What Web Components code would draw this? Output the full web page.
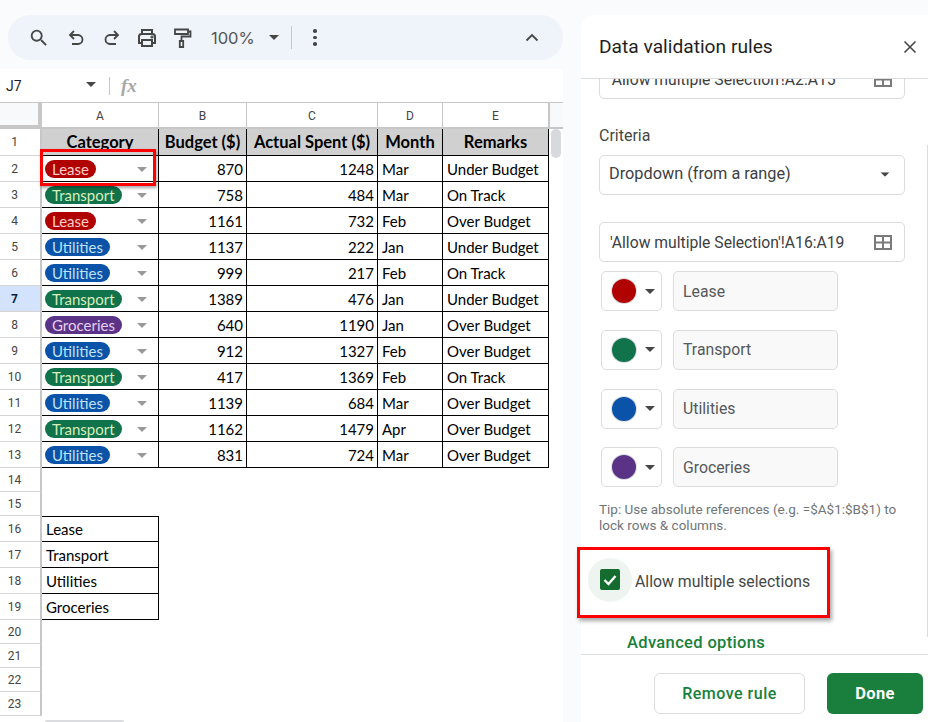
<!DOCTYPE html>
<html lang="en">
<head>
<meta charset="utf-8">
<title>Data validation rules</title>
<style>
html,body{margin:0;height:722px;overflow:hidden;background:#f9fbfd;font-family:Roboto,"Liberation Sans",sans-serif}
</style>
</head>
<body>
<sheet-app></sheet-app>
<script>
const ICONS={
 search:'<svg width="22" height="22" viewBox="0 0 24 24" fill="#444746"><path d="M15.5 14h-.79l-.28-.27A6.471 6.471 0 0 0 16 9.5 6.5 6.5 0 1 0 9.5 16c1.61 0 3.09-.59 4.23-1.57l.27.28v.79l5 4.99L20.49 19l-4.99-5zm-6 0C7.01 14 5 11.99 5 9.5S7.01 5 9.5 5 14 7.01 14 9.5 11.99 14 9.5 14z"/></svg>',
 undo:'<svg width="24" height="24" viewBox="0 0 24 24" fill="none" stroke="#444746" stroke-width="1.800"><path d="M10 5 6 9l4 4"/><path d="M6 9h8a4 4 0 0 1 0 9H8"/></svg>',
 redo:'<svg width="24" height="24" viewBox="0 0 24 24" fill="none" stroke="#444746" stroke-width="1.800"><path d="m14 5 4 4-4 4"/><path d="M18 9h-8a4 4 0 0 0 0 9h6"/></svg>',
 print:'<svg width="24" height="24" viewBox="0 0 24 24" fill="none" stroke="#444746" stroke-width="2"><path d="M7 8V4h10v4"/><path d="M7 17H4v-6.500a2.500 2.500 0 0 1 2.500-2.500h11a2.500 2.500 0 0 1 2.500 2.500V17h-3"/><path d="M7 14h10v6H7z"/><circle cx="17" cy="11" r=".6" fill="#444746"/></svg>',
 roller:'<svg width="24" height="24" viewBox="0 0 24 24" fill="none" stroke="#444746" stroke-width="1.800"><path d="M5 3.500h13v4.500H5z"/><path d="M18 5.500h2.500v5H11.500v4.500"/><path d="M9.800 15h3.400v6H9.800z"/></svg>',
 caret:'<svg width="10" height="5" viewBox="0 0 10 5" fill="currentColor" style="display:block"><path d="M0 0h10L5 5z"/></svg>',
 grid:'<svg width="18" height="15" viewBox="0 0 18 15" fill="none" stroke="#7a7a7a" stroke-width="2" style="display:block"><path d="M1 1h16v13H1zM9 1v13M1 7.500h16"/></svg>'
};

class SheetApp extends HTMLElement{
 constructor(){super();this.attachShadow({mode:'open'}).innerHTML=`
 <style>
 :host{display:flex;width:928px;height:722px;overflow:hidden}
 .left{width:563px;flex:none;padding-top:15px;box-sizing:border-box;display:flex;flex-direction:column}
 dv-panel{flex:1;margin-left:18px;margin-top:15px}
 </style>
 <div class="left">
  <sheet-toolbar></sheet-toolbar>
  <formula-bar></formula-bar>
  <sheet-area></sheet-area>
 </div>
 <dv-panel></dv-panel>`;}
}

class SheetToolbar extends HTMLElement{
 constructor(){super();this.attachShadow({mode:'open'}).innerHTML=`
 <style>
 :host{display:flex;align-items:center;height:45px;margin-left:8px;flex:none;background:#eff3fa;border-radius:22px;position:relative;color:#444746}
 .i{display:flex;flex:none;width:24px;height:24px;align-items:center;justify-content:center}
 .zoom{font:400 16.500px "Inter","Roboto",sans-serif;color:#555;margin-left:17px;width:48px;flex:none}
 .caret{margin-left:10px;flex:none;color:#444746;margin-top:-1px}
 .div{width:1px;height:23px;background:#c7c7c7;margin-left:12px;flex:none}
 .dots{display:flex;flex-direction:column;gap:3px;margin-left:21px;flex:none}
 .dots i{display:block;width:3.500px;height:3.500px;border-radius:50%;background:#444746}
 .chev{margin-left:auto;margin-right:24px;flex:none;display:block}
 </style>
 <span class="i" style="margin-left:19px">${ICONS.search}</span>
 <span class="i" style="margin-left:13px">${ICONS.undo}</span>
 <span class="i" style="margin-left:12px">${ICONS.redo}</span>
 <span class="i" style="margin-left:11px">${ICONS.print}</span>
 <span class="i" style="margin-left:11px">${ICONS.roller}</span>
 <span class="zoom">100%</span>
 <span class="caret">${ICONS.caret}</span>
 <span class="div"></span>
 <span class="dots"><i></i><i></i><i></i></span>
 <svg class="chev" width="14" height="9" viewBox="0 0 14 9" fill="none" stroke="#444746" stroke-width="1.800"><path d="m1.500 7.500 5.500-5.500 5.500 5.500"/></svg>`;}
}

class FormulaBar extends HTMLElement{
 constructor(){super();this.attachShadow({mode:'open'}).innerHTML=`
 <style>
 :host{display:flex;align-items:center;height:33px;margin-top:9px;background:#fff;flex:none}
 .ref{font:14px Roboto,sans-serif;color:#1f1f1f;margin-left:6px;width:80px;flex:none}
 .caret{color:#444746;flex:none;width:10px;margin-top:-3px}
 .div{width:1px;height:18px;background:#c7c7c7;margin-left:13px;flex:none}
 .fx{font:italic 700 19px "Liberation Serif",serif;color:#a8a8a8;margin-left:11px}
 </style>
 <span class="ref">J7</span>
 <span class="caret">${ICONS.caret}</span>
 <span class="div"></span>
 <span class="fx">fx</span>`;}
}

class StatusChip extends HTMLElement{
 constructor(){super();this.attachShadow({mode:'open'}).innerHTML=`
 <style>
 :host{display:flex;align-items:center;height:100%;box-sizing:border-box;padding:2px 11px 2px 3px}
 .chip{display:block;height:18px;line-height:18px;border-radius:9px;padding:0 7px;box-sizing:border-box;background:var(--bg);color:var(--fg);font:15px/18px var(--cell-font);white-space:nowrap}
 .arrow{margin-left:auto;color:#999;display:block;margin-top:1px}
 </style>
 <span class="chip"><slot></slot></span>
 <span class="arrow">${ICONS.caret}</span>`;}
}

const CHIP={
 Lease:['#b10202','#ffcfc9'],
 Transport:['#11734b','#d4edbc'],
 Utilities:['#0a53a8','#bfe1f6'],
 Groceries:['#5a3286','#e6cff2']
};
const DATA=[
 ['Lease',870,1248,'Mar','Under Budget'],
 ['Transport',758,484,'Mar','On Track'],
 ['Lease',1161,732,'Feb','Over Budget'],
 ['Utilities',1137,222,'Jan','Under Budget'],
 ['Utilities',999,217,'Feb','On Track'],
 ['Transport',1389,476,'Jan','Under Budget'],
 ['Groceries',640,1190,'Jan','Over Budget'],
 ['Utilities',912,1327,'Feb','Over Budget'],
 ['Transport',417,1369,'Feb','On Track'],
 ['Utilities',1139,684,'Mar','Over Budget'],
 ['Transport',1162,1479,'Apr','Over Budget'],
 ['Utilities',831,724,'Mar','Over Budget']
];

class SheetArea extends HTMLElement{
 constructor(){super();
  const rowH=[27,26,26,26,26,26,26,26,26,26,26,26,26,24,24,26,26,26,26,24,24,24,24];
  let h='';
  h+='<div class="corner"></div>';
  ['A','B','C','D','E'].forEach(c=>h+=`<div class="colh">${c}</div>`);
  const head=['Category','Budget ($)','Actual Spent ($)','Month','Remarks'];
  for(let r=1;r<=23;r++){
   h+=`<div class="rowh${r===7?' sel':''}"><span>${r}</span></div>`;
   if(r===1){head.forEach((t,i)=>h+=`<div class="c hd"><span>${t}</span></div>`);}
   else if(r<=13){
    const d=DATA[r-2],k=d[0];
    h+=`<div class="c chipc"><status-chip style="--bg:${CHIP[k][0]};--fg:${CHIP[k][1]}">${k}</status-chip></div>`;
    h+=`<div class="c num"><span>${d[1]}</span></div><div class="c num"><span>${d[2]}</span></div><div class="c"><span>${d[3]}</span></div><div class="c"><span>${d[4]}</span></div>`;
   }else if(r>=16&&r<=19){
    h+=`<div class="c${r===16?' top':''}"><span>${['Lease','Transport','Utilities','Groceries'][r-16]}</span></div><div style="grid-column:span 4"></div>`;
   }else{
    h+='<div style="grid-column:span 5"></div>';
   }
  }
  this.attachShadow({mode:'open'}).innerHTML=`
  <style>
  :host{display:flex;flex:1;min-height:0;background:#fff;overflow:hidden;position:relative;--cell-font:Lato,"Noto Sans",sans-serif}
  .g{display:grid;grid-template-columns:42px 117px 88px 131px 65px 106px;grid-template-rows:27px ${rowH.join('px ')}px;flex:none;align-content:start}
  .corner{background:#f8f9fa;border-right:4px solid #c7c7c7;border-bottom:4px solid #c7c7c7;box-sizing:border-box;border-top:1px solid #c7c7c7}
  .colh{font:12px Roboto,"Liberation Sans",sans-serif;color:#444;display:flex;align-items:center;justify-content:center;border-top:1px solid #c7c7c7;border-right:1px solid #c7c7c7;border-bottom:2px solid #c7c7c7;box-sizing:border-box;padding-top:1px}
  .rowh{font:12px Roboto,"Liberation Sans",sans-serif;color:#444;display:flex;align-items:center;justify-content:center;padding-right:11px;border-right:2px solid #c7c7c7;border-bottom:1px solid #d4d4d4;box-sizing:border-box}
  .rowh.sel{background:#d3e3fd;color:#041e49;font-weight:700}
  .c{font:15px var(--cell-font);color:#000;border-right:1px solid #000;border-bottom:1px solid #000;box-sizing:border-box;display:flex;align-items:flex-end;padding:0 3px 3px 4px;white-space:nowrap;min-width:0}
  .c.top{box-shadow:inset 0 1px 0 #000}
  .c.num{justify-content:flex-end}
  .c.hd{background:#d0d0d0;font-weight:700;font-size:16.500px;justify-content:center;padding:0 0 3px}
  .c.chipc{padding:0;display:block}
  .bar{flex:none;width:14px;display:flex;flex-direction:column}
  .bar .top{height:27px;box-sizing:border-box;background:#f8f9fa;border-top:1px solid #c7c7c7;border-left:1px solid #c7c7c7;border-bottom:2px solid #c7c7c7;flex:none}
  .thumb{width:10px;height:29px;border-radius:5px;background:#d7d9dd;margin:0 0 0 2px;flex:none}
  .hthumb{position:absolute;left:45px;bottom:0;width:79px;height:2px;border-radius:2px 2px 0 0;background:#dadce0}
  .mark{position:absolute;left:39.500px;top:47px;width:116.500px;height:37px;box-sizing:border-box;border:3px solid #f00;box-shadow:1px 2px 3px rgba(0,0,0,.35)}
  </style>
  <div class="g">${h}</div>
  <div class="bar"><div class="top"></div><div class="thumb"></div></div>
  <div class="hthumb"></div>
  <div class="mark"></div>`;
 }
}

class DvField extends HTMLElement{
 constructor(){super();this.attachShadow({mode:'open'}).innerHTML=`
 <style>
 :host{display:flex;align-items:center;height:40px;box-sizing:border-box;border:1px solid #dadce0;border-radius:5px;padding:0 12px 0 10px;background:#fff;font:15.700px Roboto,sans-serif;color:#3c4043;white-space:nowrap}
 ::slotted(*){margin-left:auto}
 .t{flex:1}
 </style>
 <span class="t"><slot></slot></span><slot name="end"></slot>`;}
}

class ColorRow extends HTMLElement{
 constructor(){super();const c=this.getAttribute('color');this.attachShadow({mode:'open'}).innerHTML=`
 <style>
 :host{display:flex;height:40px;gap:11px;margin-left:2px}
 .btn{width:61px;box-sizing:border-box;border:1px solid #dadce0;border-radius:5px;background:#fff;display:flex;align-items:center;padding-left:10px}
 .dot{width:24px;height:24px;border-radius:50%;box-sizing:border-box;background:${c};box-shadow:0 0 0 1px #dadce0;flex:none}
 .car{margin-left:9px;color:#444746;flex:none}
 .txt{width:165px;box-sizing:border-box;border:1px solid #dadce0;border-radius:5px;background:#f9f9f9;display:flex;align-items:center;padding-left:9px;font:15.800px Roboto,sans-serif;color:#55585c}
 </style>
 <span class="btn"><span class="dot"></span><span class="car">${ICONS.caret}</span></span>
 <span class="txt"><slot></slot></span>`;}
}

class DvPanel extends HTMLElement{
 constructor(){super();this.attachShadow({mode:'open'}).innerHTML=`
 <style>
 :host{display:flex;flex-direction:column;background:#fff;border-top-left-radius:14px;position:relative;height:707px;font-family:Roboto,sans-serif}
 header{flex:none;height:64px;box-sizing:border-box;border-bottom:1px solid #dadce0;display:flex;align-items:center;padding:0 11px 0 18px;font:400 19.200px Roboto,sans-serif;color:#1f1f1f}
 header svg{margin-left:auto;margin-top:1px}
 .body{flex:1;min-height:0;overflow:hidden;padding:0 23px 0 18px;position:relative}
 .first{margin-top:-20px}
 .lab{font:16px Roboto,sans-serif;color:#444746;margin-top:27px;line-height:19px;margin-bottom:10px}
 dv-field.range{margin-top:27px}
 .dd{font-size:16.300px;padding-left:9px}
 .rows{display:flex;flex-direction:column;gap:18.670px;margin-top:9.300px}
 .tip{font:13.500px/16px Roboto,sans-serif;color:#70757a;margin-top:13.700px}
 .check{display:flex;align-items:center;margin-top:25px;height:44px;margin-left:-11px}
 .halo{width:44px;height:44px;border-radius:50%;background:#eef4f0;display:flex;align-items:center;justify-content:center;flex:none}
 .box{width:20px;height:21px;border-radius:2px;background:#146c2e;display:block}
 .check span.l{font:15.800px Roboto,sans-serif;color:#444746;margin-left:3px;margin-top:3px}
 .adv{font:500 16.500px Roboto,sans-serif;letter-spacing:.35px;color:#188038;margin:31px 0 0 28px;line-height:20px}
 footer{flex:none;height:68px;box-sizing:border-box;border-top:1px solid #dadce0;display:flex;align-items:flex-start;padding:18px 5px 0 73px;justify-content:space-between}
 .b{height:41px;box-sizing:border-box;border-radius:6px;display:flex;align-items:center;justify-content:center;font:500 16px Roboto,sans-serif;letter-spacing:.5px}
 .rm{width:151px;border:1px solid #dadce0;color:#188038;background:#fff}
 .dn{width:96px;background:#1a7f3c;color:#fff;font-weight:700;font-size:16.500px;letter-spacing:.3px}
 .sb{position:absolute;right:0;top:66px;width:1px;height:492px;background:#dadce0}
 .mark{position:absolute;left:-4px;top:532px;width:252.500px;height:70.500px;box-sizing:border-box;border:3px solid #f00;box-shadow:2px 3px 4px rgba(0,0,0,.35);z-index:2}
 </style>
 <header>Data validation rules
  <svg width="14" height="14" viewBox="0 0 14 14" fill="none" stroke="#444746" stroke-width="1.600"><path d="m1.500 1.500 11 11M12.500 1.500l-11 11"/></svg>
 </header>
 <div class="body">
  <dv-field class="first">'Allow multiple Selection'!A2:A15<span slot="end" style="display:block">${ICONS.grid}</span></dv-field>
  <div class="lab">Criteria</div>
  <dv-field class="dd"><span style="display:block;margin:-3px 0 0">Dropdown (from a range)</span><span slot="end" style="display:block;color:#444746;transform:scale(.9);margin:-2px 2px 0 auto">${ICONS.caret}</span></dv-field>
  <dv-field class="range">'Allow multiple Selection'!A16:A19<span slot="end" style="display:block">${ICONS.grid}</span></dv-field>
  <div class="rows">
   <color-row color="#b10202">Lease</color-row>
   <color-row color="#11734b">Transport</color-row>
   <color-row color="#0a53a8">Utilities</color-row>
   <color-row color="#5a3286">Groceries</color-row>
  </div>
  <div class="tip">Tip: Use absolute references (e.g. =$A$1:$B$1) to lock rows &amp; columns.</div>
  <div class="check"><span class="halo"><svg class="box" viewBox="0 0 20 21"><path d="M4.500 11 8.500 15 15.500 7" fill="none" stroke="#fff" stroke-width="2.400"/></svg></span><span class="l">Allow multiple selections</span></div>
  <div class="adv">Advanced options</div>
  <div class="sb"></div>
 </div>
 <footer><span class="b rm">Remove rule</span><span class="b dn">Done</span></footer>
 <div class="mark"></div>`;}
}

customElements.define('sheet-toolbar',SheetToolbar);
customElements.define('formula-bar',FormulaBar);
customElements.define('status-chip',StatusChip);
customElements.define('sheet-area',SheetArea);
customElements.define('dv-field',DvField);
customElements.define('color-row',ColorRow);
customElements.define('dv-panel',DvPanel);
customElements.define('sheet-app',SheetApp);
</script>
</body>
</html>
